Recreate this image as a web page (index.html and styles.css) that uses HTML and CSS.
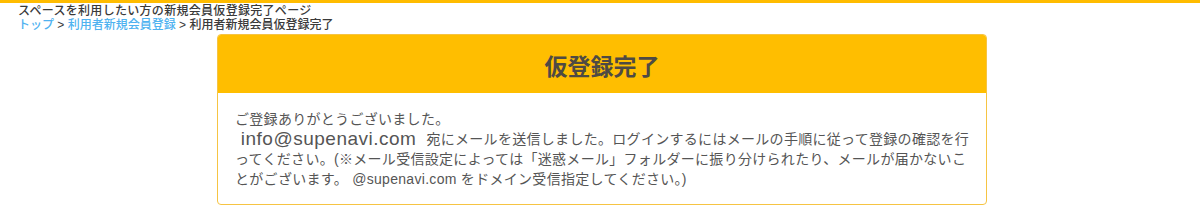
FILE: index.html
```html
<!DOCTYPE html>
<html lang="ja">
<head>
<meta charset="utf-8">
<title>仮登録完了</title>
<link rel="stylesheet" href="styles.css">
</head>
<body>
<header class="page-head">
  <h1 class="page-title">スペースを利用したい方の新規会員仮登録完了ページ</h1>
  <nav class="crumbs"><a href="#">トップ</a> &gt; <a href="#">利用者新規会員登録</a> &gt; 利用者新規会員仮登録完了</nav>
</header>
<main class="wrap">
  <section class="panel">
    <div class="panel-head"><h2 class="panel-title">仮登録完了</h2></div>
    <div class="panel-body">
      <p class="msg">ご登録ありがとうございました。<br><span class="mail">&nbsp;info@supenavi.com&nbsp;</span> 宛にメールを送信しました。ログインするにはメールの手順に従って登録の確認を行ってください。(※メール受信設定によっては「迷惑メール」フォルダーに振り分けられたり、メールが届かないことがございます。 @supenavi.com をドメイン受信指定してください。)</p>
    </div>
  </section>
</main>
</body>
</html>
```

FILE: styles.css
```css
html, body {
  margin: 0;
  padding: 0;
  background: #fff;
}
body {
  font-family: "Liberation Sans", "Noto Sans CJK JP", sans-serif;
  color: #444;
  border-top: 3px solid #ffbc00;
}
.page-head {
  padding: 1px 18px 0;
}
.page-title {
  margin: 0;
  font-size: 12px;
  line-height: 14px;
  letter-spacing: 0.3px;
  font-weight: 500;
  color: #3a3a3a;
}
.crumbs {
  font-size: 12px;
  line-height: 15px;
  color: #3a3a3a;
  font-weight: 500;
}
.crumbs a {
  color: #4fb2f0;
  text-decoration: none;
}
.wrap {
  width: 770px;
  margin: 1px auto 0;
  padding-left: 4px;
}
.panel {
  border: 1px solid #f6c443;
  border-radius: 4px;
  overflow: hidden;
}
.panel-head {
  background: #ffbe00;
  padding: 19px 15px 12px;
  margin: -1px -1px 0;
  border-top: 1px solid #ffbe00;
}
.panel-title {
  margin: 0;
  text-align: center;
  font-size: 23px;
  line-height: 27px;
  font-weight: bold;
  color: #4e4a44;
}
.panel-body {
  padding: 16px 15px 15px 17px;
}
.msg {
  margin: 0;
  font-size: 14px;
  line-height: 20px;
  letter-spacing: 0.3px;
  color: #555;
}
.mail {
  display: inline-block;
  font-size: 19px;
  line-height: 20px;
  height: 20px;
  overflow: hidden;
  vertical-align: bottom;
  letter-spacing: 0.5px;
  color: #555;
}
```
